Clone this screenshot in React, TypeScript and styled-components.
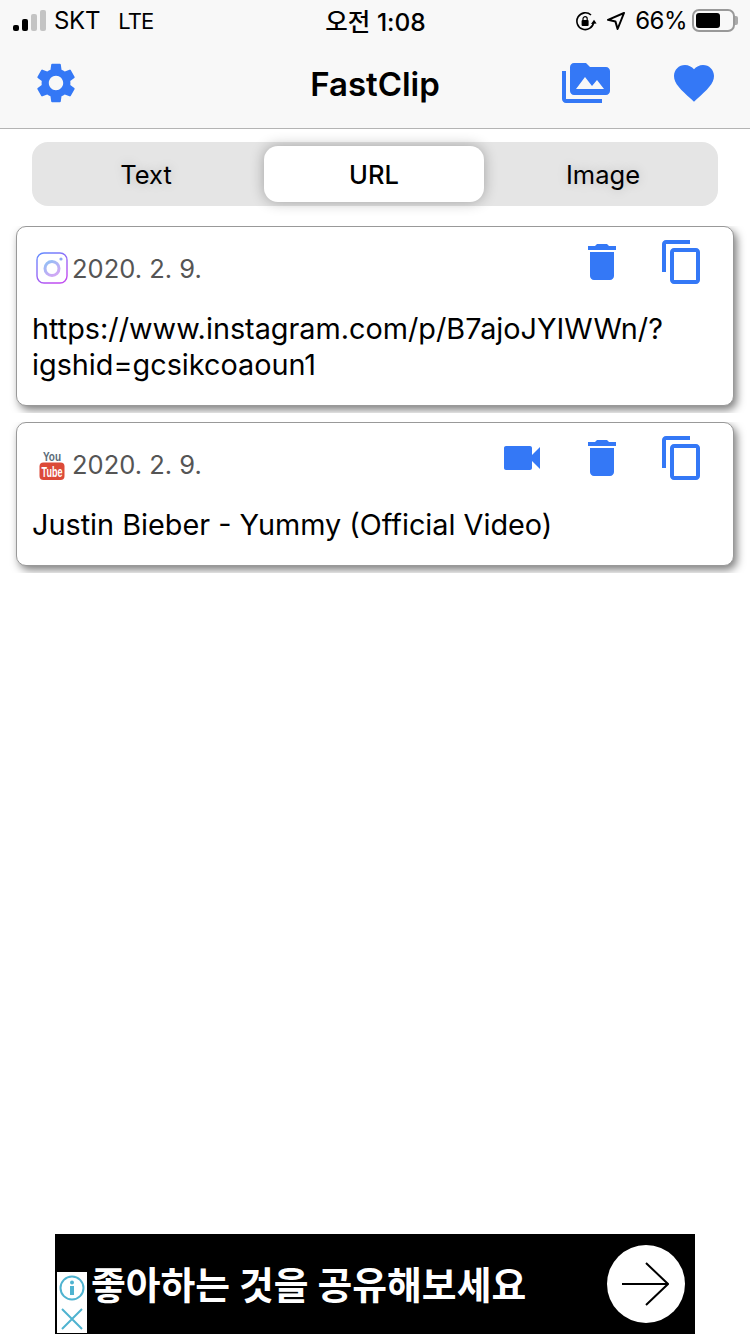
import styled, { createGlobalStyle } from 'styled-components'
import {
  MdContentCopy,
  MdDelete,
  MdFavorite,
  MdPermMedia,
  MdSettings,
  MdVideocam,
} from 'react-icons/md'

const BLUE = '#3478f6'
const FONT = `Inter, 'Noto Sans CJK KR', sans-serif`

const GlobalStyle = createGlobalStyle`
  html, body {
    margin: 0;
    padding: 0;
    background: #fff;
  }
  * {
    box-sizing: border-box;
  }
`

const SIGNAL = [
  { height: 6, on: true },
  { height: 12, on: true },
  { height: 17, on: false },
  { height: 21, on: false },
]

const InstagramIcon = () => (
  <svg width="32" height="32" viewBox="0 0 32 32">
    <defs>
      <linearGradient id="ig" x1="0" y1="0" x2="0.6" y2="1">
        <stop offset="0" stopColor="#5f8dff" />
        <stop offset="1" stopColor="#c04df0" />
      </linearGradient>
      <linearGradient id="igRing" x1="0" y1="0" x2="0.6" y2="1">
        <stop offset="0" stopColor="#8fc0f5" />
        <stop offset="1" stopColor="#cfa8f5" />
      </linearGradient>
    </defs>
    <rect x="1" y="1" width="30" height="30" rx="7" fill="#fff" stroke="url(#ig)" strokeWidth="1.4" />
    <circle cx="16" cy="16.5" r="7" fill="none" stroke="url(#igRing)" strokeWidth="3" />
    <circle cx="25" cy="7" r="1.6" fill="#8fa8f5" />
  </svg>
)

const YoutubeIcon = () => (
  <svg width="26" height="32" viewBox="0 0 26 32">
    <text
      transform="translate(13 13) scale(1 1.35)"
      textAnchor="middle"
      fontFamily="'Liberation Sans', sans-serif"
      fontWeight="700"
      fontSize="10"
      fill="#5b6b78"
    >
      You
    </text>
    <rect x="0.5" y="14.5" width="25" height="17.5" rx="4" fill="#dc4a38" />
    <text
      transform="translate(13 28.5) scale(1 1.6)"
      textAnchor="middle"
      fontFamily="'Liberation Sans', sans-serif"
      fontWeight="700"
      fontSize="9"
      fill="#fff"
    >
      Tube
    </text>
  </svg>
)

const RotationLockIcon = () => (
  <svg width="22" height="20" viewBox="0 0 22 20" fill="none">
    <path d="M18.6 11.5A8.4 8.4 0 1 1 16 4" stroke="#000" strokeWidth="1.6" />
    <path d="M16 13l5.6-.6-2.6-3.6z" fill="#000" />
    <rect x="6.6" y="9" width="7" height="6" rx="1" fill="#000" />
    <path d="M8 9.5V7.8a2.1 2.1 0 0 1 4.2 0v1.7" stroke="#000" strokeWidth="1.2" />
  </svg>
)

const LocationIcon = () => (
  <svg width="18" height="18" viewBox="0 0 18 18" fill="none">
    <path d="M17 1L1 7.8l7.4 1.6L10.6 17z" stroke="#000" strokeWidth="2" strokeLinejoin="round" />
  </svg>
)

const ArrowIcon = () => (
  <svg width="48" height="44" viewBox="0 0 48 44" fill="none">
    <path d="M1 22h46M25 1l22 21-22 21" stroke="#000" strokeWidth="2" />
  </svg>
)

const InfoIcon = () => (
  <svg width="26" height="26" viewBox="0 0 26 26" fill="none">
    <circle cx="13" cy="13" r="11.5" stroke="#4fb3d0" strokeWidth="2" />
    <rect x="11" y="11" width="4" height="9" fill="#4fb3d0" />
    <circle cx="13" cy="7.5" r="2" fill="#4fb3d0" />
  </svg>
)

const CloseIcon = () => (
  <svg width="22" height="22" viewBox="0 0 22 22" fill="none">
    <path d="M1 1l20 20M21 1L1 21" stroke="#4fb3d0" strokeWidth="2" />
  </svg>
)

const App = () => {
  return (
    <>
      <GlobalStyle />
      <S.Page>
        <S.Header>
          <S.StatusBar>
            <S.StatusLeft>
              <S.Signal>
                {SIGNAL.map(bar => (
                  <S.SignalBar key={bar.height} $height={bar.height} $on={bar.on} />
                ))}
              </S.Signal>
              <S.Carrier>SKT</S.Carrier>
              <S.Network>LTE</S.Network>
            </S.StatusLeft>
            <S.Clock>오전 1:08</S.Clock>
            <S.StatusRight>
              <RotationLockIcon />
              <LocationIcon />
              <S.BatteryText>66%</S.BatteryText>
              <S.Battery>
                <S.BatteryLevel />
              </S.Battery>
              <S.BatteryNub />
            </S.StatusRight>
          </S.StatusBar>
          <S.NavBar>
            <S.NavSide>
              <S.IconButton>
                <MdSettings />
              </S.IconButton>
            </S.NavSide>
            <S.Title>FastClip</S.Title>
            <S.NavActions>
              <S.IconButton>
                <MdPermMedia />
              </S.IconButton>
              <S.IconButton>
                <MdFavorite />
              </S.IconButton>
            </S.NavActions>
          </S.NavBar>
        </S.Header>

        <S.Segments>
          <S.Segment>Text</S.Segment>
          <S.Segment $active>URL</S.Segment>
          <S.Segment>Image</S.Segment>
        </S.Segments>

        <S.List>
          <S.CardSlot>
            <S.Card>
              <S.CardHead>
                <S.SourceIcon>
                  <InstagramIcon />
                </S.SourceIcon>
                <S.Date>2020. 2. 9.</S.Date>
                <S.CardActions>
                  <S.IconButton>
                    <MdDelete />
                  </S.IconButton>
                  <S.IconButton>
                    <MdContentCopy />
                  </S.IconButton>
                </S.CardActions>
              </S.CardHead>
              <S.CardText>https://www.instagram.com/p/B7ajoJYIWWn/?igshid=gcsikcoaoun1</S.CardText>
            </S.Card>
          </S.CardSlot>
          <S.CardSlot>
            <S.Card>
              <S.CardHead>
                <S.SourceIcon>
                  <YoutubeIcon />
                </S.SourceIcon>
                <S.Date>2020. 2. 9.</S.Date>
                <S.CardActions>
                  <S.IconButton>
                    <MdVideocam />
                  </S.IconButton>
                  <S.IconButton>
                    <MdDelete />
                  </S.IconButton>
                  <S.IconButton>
                    <MdContentCopy />
                  </S.IconButton>
                </S.CardActions>
              </S.CardHead>
              <S.CardText>Justin Bieber - Yummy (Official Video)</S.CardText>
            </S.Card>
          </S.CardSlot>
        </S.List>

        <S.Ad>
          <S.AdBadge>
            <InfoIcon />
            <CloseIcon />
          </S.AdBadge>
          <S.AdText>좋아하는 것을 공유해보세요</S.AdText>
          <S.AdArrow>
            <ArrowIcon />
          </S.AdArrow>
        </S.Ad>
      </S.Page>
    </>
  )
}

export default App

const S = {
  Page: styled.div`
    display: flex;
    flex-direction: column;
    width: 750px;
    height: 1334px;
    overflow: hidden;
    background: #fff;
    font-family: ${FONT};
    color: #000;
  `,

  Header: styled.header`
    height: 129px;
    background: #f8f8f8;
    border-bottom: 1px solid #b4b4b4;
  `,

  StatusBar: styled.div`
    display: grid;
    grid-template-columns: 1fr auto 1fr;
    align-items: center;
    height: 40px;
    padding: 1px 12px 0 13px;
    font-size: 24px;
  `,

  StatusLeft: styled.div`
    display: flex;
    align-items: center;
  `,

  Signal: styled.div`
    display: flex;
    align-items: flex-end;
    gap: 3px;
    height: 21px;
    margin-right: 8px;
  `,

  SignalBar: styled.i<{ $height: number; $on: boolean }>`
    width: 6px;
    height: ${p => p.$height}px;
    border-radius: 2px;
    background: ${p => (p.$on ? '#000' : '#c4c4c4')};
  `,

  Carrier: styled.span`
    margin-right: 18px;
    letter-spacing: -0.3px;
  `,

  Network: styled.span`
    font-size: 22px;
    letter-spacing: -0.8px;
  `,

  Clock: styled.div`
    font-size: 24.5px;
    font-weight: 500;
  `,

  StatusRight: styled.div`
    display: flex;
    align-items: center;
    justify-content: flex-end;
    gap: 10px;
  `,

  BatteryText: styled.span`
    font-size: 24px;
    letter-spacing: -0.5px;
  `,

  Battery: styled.div`
    display: flex;
    align-items: center;
    width: 43px;
    height: 23px;
    margin-left: -5px;
    padding: 0 2px;
    border: 2px solid #999;
    border-radius: 7px;
  `,

  BatteryLevel: styled.div`
    width: 24px;
    height: 15px;
    border-radius: 3px;
    background: #000;
  `,

  BatteryNub: styled.div`
    width: 3px;
    height: 9px;
    margin-left: -10px;
    border-radius: 0 2px 2px 0;
    background: #aaa;
  `,

  NavBar: styled.nav`
    display: grid;
    grid-template-columns: 1fr auto 1fr;
    align-items: center;
    height: 88px;
    padding: 0 32px 2px;
  `,

  NavSide: styled.div`
    display: flex;
  `,

  NavActions: styled.div`
    display: flex;
    justify-content: flex-end;
    gap: 60px;
  `,

  Title: styled.h1`
    margin: 2px 0 0;
    font-size: 33px;
    font-weight: 600;
  `,

  IconButton: styled.button`
    display: block;
    width: 48px;
    height: 48px;
    padding: 0;
    border: 0;
    background: none;
    color: ${BLUE};
    font-size: 48px;
    line-height: 0;
  `,

  Segments: styled.div`
    display: grid;
    grid-template-columns: 228px 220px 1fr;
    gap: 4px;
    align-items: center;
    height: 64px;
    margin: 13px 32px 0;
    border-radius: 16px;
    background: #e5e5e5;
  `,

  Segment: styled.div<{ $active?: boolean }>`
    display: flex;
    align-items: center;
    justify-content: center;
    height: 56px;
    border-radius: 14px;
    font-size: 25.5px;
    font-weight: ${p => (p.$active ? 500 : 400)};
    background: ${p => (p.$active ? '#fff' : 'transparent')};
    box-shadow: ${p => (p.$active ? '0 0 14px rgba(0, 0, 0, 0.3)' : 'none')};
    text-shadow: ${p => (p.$active ? 'none' : '0 0 12px rgba(0, 0, 0, 0.18)')};
  `,

  List: styled.div`
    display: flex;
    flex-direction: column;
    margin-top: 20px;
    flex: 1;
  `,

  CardSlot: styled.div`
    margin-bottom: 9px;
    padding: 0 16px 7px;
    overflow: hidden;
  `,

  Card: styled.article`
    border: 1px solid #999;
    border-radius: 10px;
    background: #fff;
    box-shadow: 3px 4px 8px rgba(0, 0, 0, 0.5);
  `,

  CardHead: styled.div`
    display: flex;
    align-items: center;
    padding: 11px 27px 0 19px;
  `,

  SourceIcon: styled.div`
    display: flex;
    justify-content: center;
    width: 32px;
    height: 32px;
    margin-top: 12px;
    margin-right: 4px;
  `,

  Date: styled.span`
    margin-top: 12px;
    font-size: 25.5px;
    color: #555;
  `,

  CardActions: styled.div`
    display: flex;
    gap: 32px;
    margin-left: auto;
  `,

  CardText: styled.p`
    margin: 25px 0 0;
    padding: 0 15px 22px;
    font-size: 28.8px;
    line-height: 36px;
  `,

  Ad: styled.aside`
    position: relative;
    display: flex;
    align-items: center;
    width: 640px;
    height: 100px;
    margin: 0 0 0 55px;
    padding: 0 10px 0 36px;
    background: #000;
  `,

  AdBadge: styled.div`
    position: absolute;
    left: 2px;
    bottom: 1px;
    display: flex;
    flex-direction: column;
    align-items: center;
    justify-content: space-around;
    width: 30px;
    height: 61px;
    background: #fff;
  `,

  AdText: styled.div`
    margin-bottom: 3px;
    font-size: 37.8px;
    font-weight: 700;
    color: #fff;
  `,

  AdArrow: styled.div`
    display: flex;
    align-items: center;
    justify-content: center;
    width: 78px;
    height: 78px;
    margin-left: auto;
    padding-right: 2px;
    border-radius: 50%;
    background: #fff;
  `,
}
